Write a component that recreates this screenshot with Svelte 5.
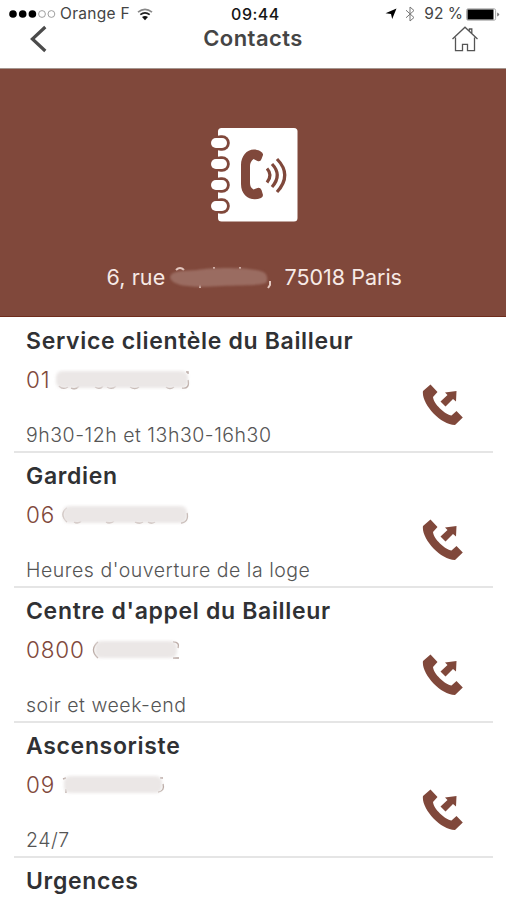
<script lang="ts">
  interface Contact {
    name: string
    phone: string
    hours?: string
    mask: { x: number; width: number; marks: string }
  }

  // mask.x is measured from the left edge of the phone line
  const contacts: Contact[] = [
    {
      name: "Service clientèle du Bailleur",
      phone: "01",
      hours: "9h30-12h et 13h30-16h30",
      mask: {
        x: 30,
        width: 132,
        marks: "M33 17q4 4 9 1M45 19q5 2 8-2M69 18q5 3 8-1M81 18q5 3 9-1M104 18q5 3 9 0M140 18q4 3 8 0M156 19q8 1 6-8M160 3h2v2",
      },
    },
    {
      name: "Gardien",
      phone: "06",
      hours: "Heures d'ouverture de la loge",
      mask: {
        x: 37,
        width: 124,
        marks: "M41 4q-8 6 0 14M48 18q5 2 7-1M80 18q5 2 8-1M109 18q5 2 8 0M122 18q4 2 7 0M155 19q8-1 6-10",
      },
    },
    {
      name: "Centre d'appel du Bailleur",
      phone: "0800",
      hours: "soir et week-end",
      mask: { x: 69, width: 82, marks: "M72 3q-9 8 0 16M147 3q7 0 5 6M147 19h6" },
    },
    {
      name: "Ascensoriste",
      phone: "09",
      hours: "24/7",
      mask: { x: 38, width: 98, marks: "M37 5l3-1M40 15v4M132 18q7-1 5-8M134 4h3" },
    },
  ]
</script>

<div class="screen">
  <header>
    <div class="status">
      <div class="carrier">
        <svg class="signal" width="47" height="10" viewBox="0 0 47 10" aria-hidden="true">
          <circle cx="4" cy="5" r="3.8" />
          <circle cx="13.7" cy="5" r="3.8" />
          <circle cx="23.4" cy="5" r="3.8" />
          <circle class="off" cx="33" cy="5" r="3.4" />
          <circle class="off" cx="42.4" cy="5" r="3.4" />
        </svg>
        <span class="operator">Orange F</span>
        <svg class="wifi" width="16" height="13" viewBox="0 0 16 13" aria-hidden="true">
          <path class="outer" d="M1 4.2Q8-1.5 15 4.2" />
          <path d="M3.3 6.7Q8 3 12.7 6.7" />
          <path class="dot" d="M5 9Q8 6.8 11 9L8 12.2Z" />
        </svg>
      </div>
      <time>09:44</time>
      <div class="power">
        <svg class="location" width="12" height="12" viewBox="0 0 12 12" aria-hidden="true">
          <path d="M11.5.5L7.2 11 6 6 .5 5.3Z" />
        </svg>
        <svg class="bluetooth" width="10" height="16" viewBox="0 0 10 16" aria-hidden="true">
          <path d="M1 4.2l8 7.3-4 3.5V1l4 3.5-8 7.3" />
        </svg>
        <span class="percent">92 %</span>
        <svg class="battery" width="34" height="13" viewBox="0 0 34 13" aria-hidden="true">
          <rect class="case" x=".6" y=".8" width="29" height="11.4" rx="1.5" />
          <rect x="1.5" y="1.5" width="26" height="10" />
          <path class="cap" d="M31.2 4.5v4q2-1 2-2t-2-2" />
        </svg>
      </div>
    </div>
    <nav>
      <button type="button" class="back" aria-label="Retour">
        <svg width="17" height="28" viewBox="0 0 17 28">
          <path d="M15.3 2L2.4 14l12.9 12" />
        </svg>
      </button>
      <h1>Contacts</h1>
      <button type="button" class="home" aria-label="Accueil">
        <svg width="28" height="26" viewBox="0 0 28 26">
          <path d="M1.5 13L14 1.2 26.5 13M4.5 11.5V24.6h7v-6.2h5v6.2h7V11.5M18.4 4.5V3h2.4v4" />
        </svg>
      </button>
    </nav>
  </header>

  <section class="hero">
    <svg class="book" width="88" height="96" viewBox="0 0 88 96" aria-hidden="true">
      <rect class="page" x="8" y="1" width="79.5" height="93.5" rx="3.5" />
      {#each [16, 37, 58, 79] as y}
        <rect class="gap" x="3" y={y - 7.7} width="16.8" height="15.4" rx="7.7" />
        <rect class="ring" x="1" y={y - 4.9} width="16" height="9.8" rx="4.9" />
      {/each}
      <path
        class="handset"
        d="M50 24C40 19 31 27 31 38V57C31 69 41 75 51 71q2-1 2-3l-1.5-5q-1.5-3-4-2l-4 1.5q-3.500-2-3.500-6.500V39q0-4 3.500-7l4 2q3 1 4-2l1.500-4q.5-2-3-4z"
      />
      <path class="waves" d="M57 41.5q6 6.500 0 14M62 37q10.500 11 0 23M67 32q15.500 16 0 33" />
    </svg>
    <p class="address">
      <span class="street">6, rue</span>
      <svg class="hidden-street" width="103" height="28" viewBox="0 0 103 28" aria-hidden="true">
        <path class="letters" d="M7 7q4-4 8 0M31 21v4M45 4v2M71 4v2" />
        <path class="smear" d="M1 14C3 7 16 8 28 7 45 4 88 4 96 10q4 5 1 10c-9 3-28 2-44 3C35 24 3 26 1 14z" />
        <path class="letters" d="M101 18v4l-2 3" />
      </svg>
      <span class="city">75018 Paris</span>
    </p>
  </section>

  <ul>
    {#each contacts as contact}
      <li>
        <div class="details">
          <h2>{contact.name}</h2>
          <p class="phone">
            {contact.phone}
            <svg class="mask" width="172" height="24" viewBox="0 0 172 24" aria-hidden="true">
              <path d={contact.mask.marks} />
              <rect x={contact.mask.x} y="2" width={contact.mask.width} height="17" rx="6" />
            </svg>
          </p>
          <p class="hours">{contact.hours}</p>
        </div>
        <button type="button" class="call" aria-label="Appeler {contact.name}">
          <svg width="42" height="42" viewBox="0 0 42 42">
            <path
              d="M8.5 .5L1 7C-1 19 18 41 33 41l7.800-7.500-6.300-6.500-5 4.500C23 30.500 11.500 20 11 13l4.500-5z"
            />
            <path d="M18.500 17.500l7-6.500-2.500-2.500 11.500-1.500-.5 10.500-3-2.500-7.500 7.500z" />
          </svg>
        </button>
      </li>
    {/each}
    <li>
      <div class="details">
        <h2>Urgences</h2>
      </div>
    </li>
  </ul>
</div>

<style>
  :global(body) {
    margin: 0;
    background: #fff;
  }

  .screen {
    width: 506px;
    height: 900px;
    overflow: hidden;
    background: #fff;
    color: #303134;
    font-family: Inter, "Open Sans", sans-serif;
  }

  h1,
  h2,
  p,
  ul {
    margin: 0;
    padding: 0;
  }

  svg {
    display: block;
    flex: none;
  }

  button {
    padding: 0;
    border: 0;
    background: none;
    cursor: pointer;
  }

  header {
    height: 69px;
    border-bottom: 1px solid #a5968f;
    box-sizing: border-box;
  }

  .status {
    display: grid;
    grid-template-columns: 1fr auto 1fr;
    height: 28px;
    padding: 0 6px 0 9px;
    align-items: center;
    font-size: 16px;
    line-height: 28px;
    color: #444;
  }

  .carrier,
  .power {
    display: flex;
    align-items: center;
  }

  .signal .off {
    fill: none;
    stroke: #888;
    stroke-width: 0.8;
  }

  .operator {
    width: 70px;
    margin-left: 4px;
    font-size: 15.5px;
    letter-spacing: 0.3px;
    white-space: nowrap;
  }

  .wifi {
    margin-left: 7px;
    fill: none;
    stroke: #222;
    stroke-width: 1.7;
  }

  .wifi .outer {
    stroke: #888;
  }

  .wifi .dot {
    fill: #111;
    stroke: none;
  }

  time {
    padding-left: 2px;
    font-weight: 500;
    font-size: 16px;
    letter-spacing: 0.5px;
    color: #161616;
  }

  .power {
    justify-content: flex-end;
  }

  .bluetooth {
    margin-left: 8px;
    fill: none;
    stroke: #777;
    stroke-width: 1;
  }

  .percent {
    margin-left: 9px;
    font-size: 15.5px;
    white-space: nowrap;
  }

  .battery {
    margin-left: 3px;
  }

  .battery .case {
    fill: none;
    stroke: #aaa;
  }

  .battery .cap {
    fill: #777;
  }

  nav {
    display: grid;
    grid-template-columns: 60px 1fr 60px;
    height: 28px;
    margin-top: -3px;
  }

  .back {
    margin-left: 30px;
    width: 17px;
    height: 28px;
  }

  .back path {
    fill: none;
    stroke: #4b4b4b;
    stroke-width: 3.2;
  }

  h1 {
    text-align: center;
    font-size: 22px;
    font-weight: 600;
    line-height: 27px;
    letter-spacing: 0.45px;
    color: #454545;
  }

  .home {
    width: 28px;
    height: 26px;
    margin: 1px 0 0 5px;
  }

  .home path {
    fill: none;
    stroke: #555;
    stroke-width: 1.3;
  }

  .hero {
    display: flex;
    flex-direction: column;
    align-items: center;
    height: 248px;
    padding-top: 58px;
    box-sizing: border-box;
    border-bottom: 1px solid #6f2c1c;
    background: #80483b;
  }

  .book {
    margin-left: 2px;
  }

  .page,
  .ring {
    fill: #fff;
  }

  .gap,
  .handset {
    fill: #80483b;
  }

  .waves {
    fill: none;
    stroke: #80483b;
    stroke-width: 3.2;
  }

  .address {
    display: flex;
    align-items: center;
    width: 293px;
    height: 30px;
    margin-top: 39px;
    font-size: 21.5px;
    color: #f7eae6;
    white-space: nowrap;
  }

  .street {
    flex: none;
    width: 62px;
    letter-spacing: 0.1px;
  }

  .city {
    margin-left: 13px;
  }

  .smear {
    fill: #9a6c61;
    filter: blur(0.8px);
  }

  .letters {
    fill: none;
    stroke: #e3c8c0;
    stroke-width: 2;
  }

  ul {
    list-style: none;
    padding: 1px 13px 0 14px;
  }

  li {
    display: flex;
    justify-content: space-between;
    height: 135px;
    padding: 0 29px 0 12px;
    box-sizing: border-box;
    border-bottom: 2px solid #e5e5e5;
  }

  .details {
    white-space: nowrap;
  }

  h2 {
    padding-top: 9px;
    font-size: 23px;
    font-weight: 600;
    line-height: 29px;
    letter-spacing: 0.67px;
  }

  .phone {
    position: relative;
    margin-top: 10px;
    font-size: 22.5px;
    font-weight: 300;
    line-height: 28px;
    letter-spacing: 0.8px;
    color: #80483b;
  }

  .mask {
    position: absolute;
    top: 3px;
    left: 0;
  }

  .mask rect {
    fill: #ebe7e6;
    filter: blur(1.4px);
  }

  .mask path {
    fill: none;
    stroke: #b5a49e;
    stroke-width: 1.4;
  }

  .hours {
    margin-top: 27px;
    font-size: 19.5px;
    font-weight: 300;
    line-height: 28px;
    letter-spacing: 0.52px;
    color: #555;
  }

  .call {
    width: 42px;
    height: 42px;
    margin-top: 66px;
  }

  .call path {
    fill: #80483b;
  }
</style>
